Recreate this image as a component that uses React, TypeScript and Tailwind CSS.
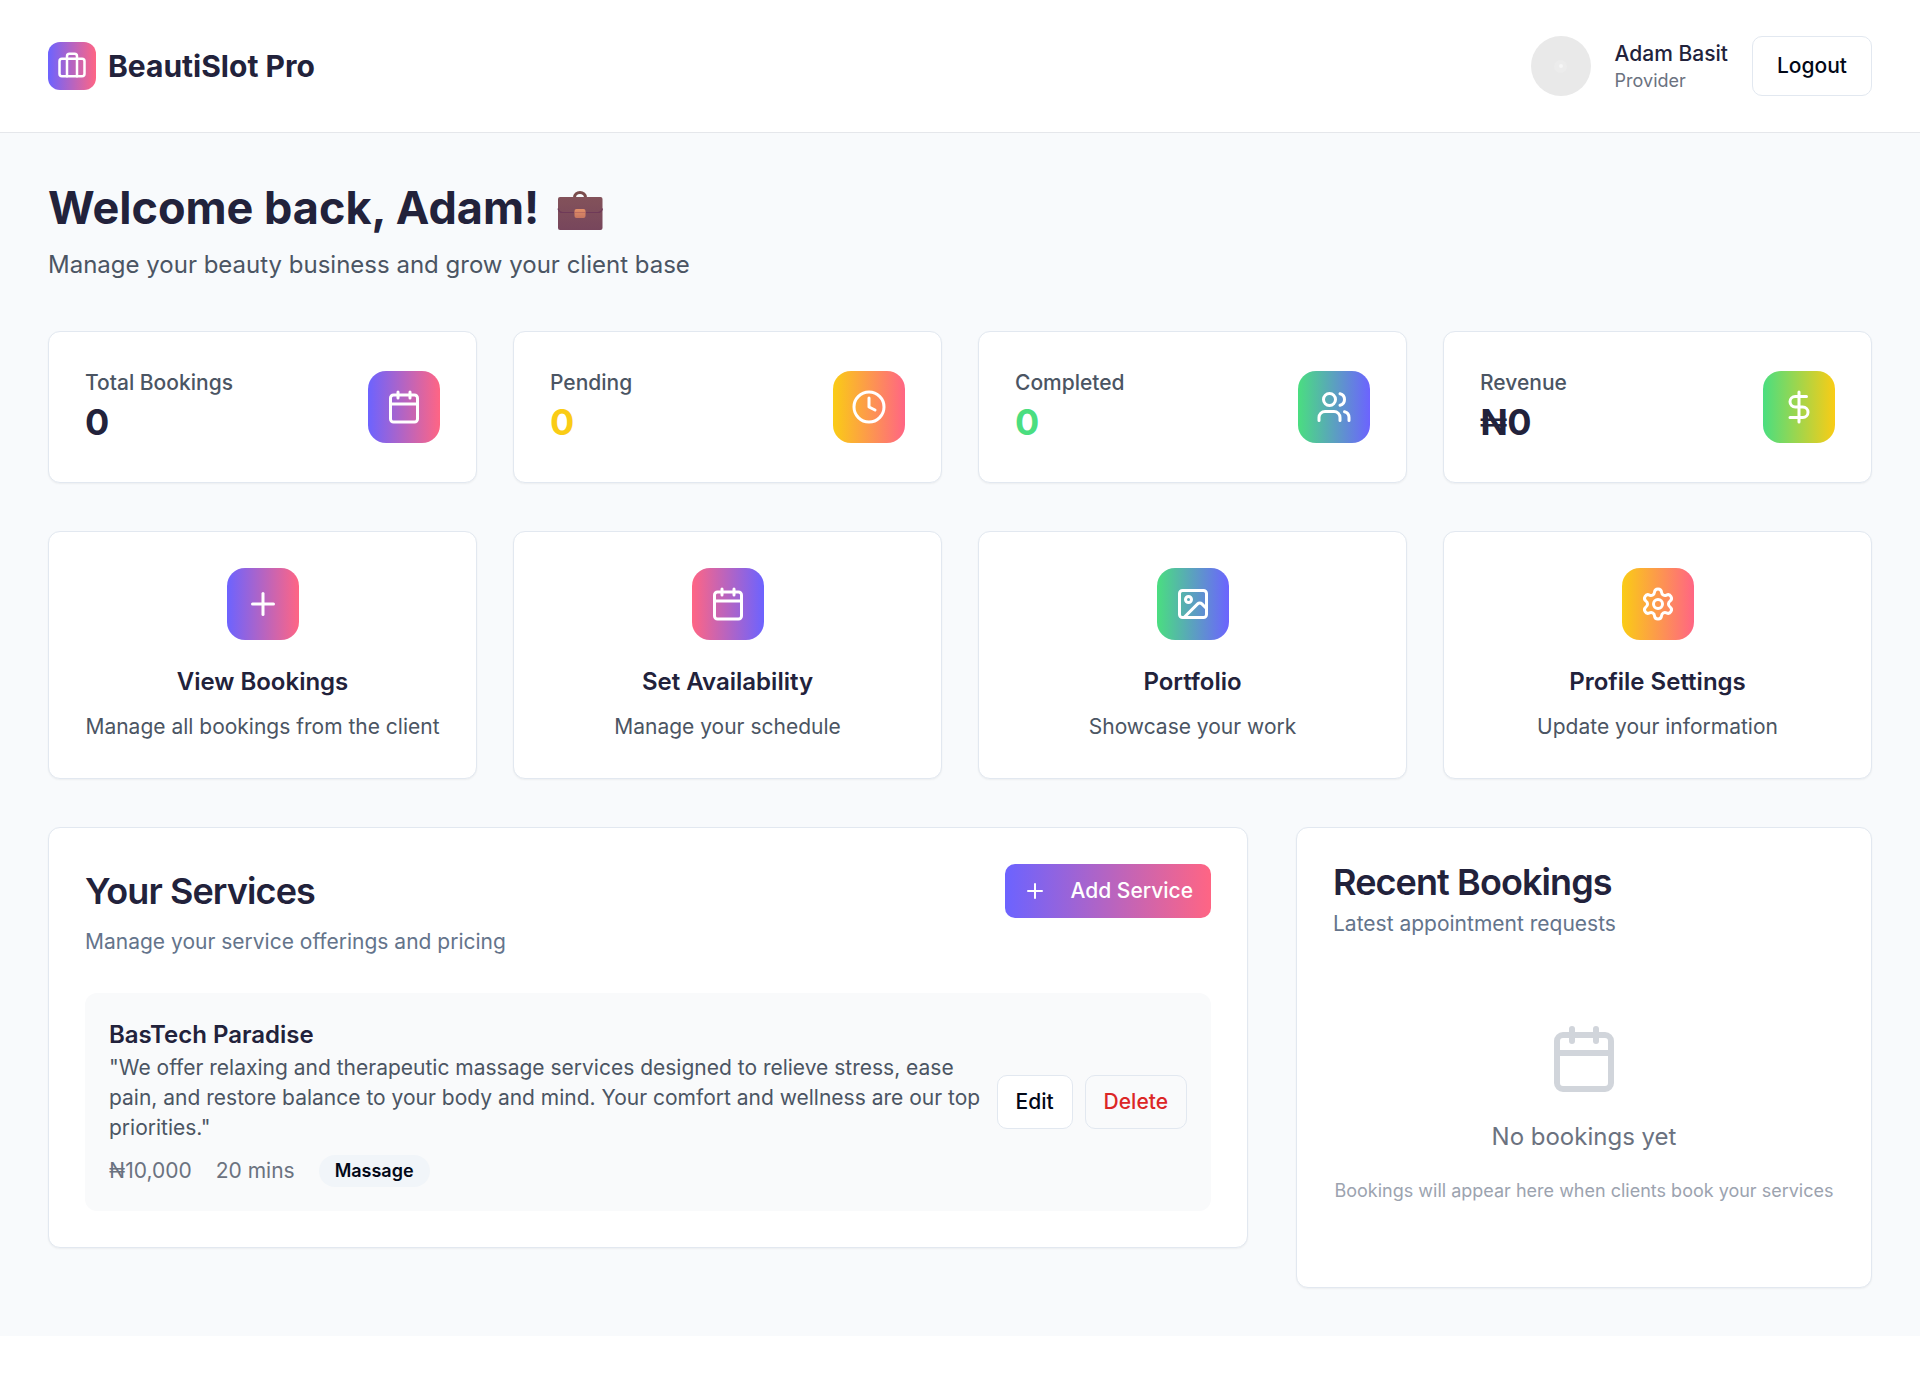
import type { ReactNode } from "react";
import { Calendar, Clock, DollarSign, Image, Plus, Settings, Users } from "lucide-react";

const card = "rounded-xl border border-[#e2e8f0] bg-white shadow-[0_1px_2px_0_rgba(0,0,0,0.05)]";

function BriefcaseIcon() {
  return (
    <svg className="size-[30px]" viewBox="0 0 24 24" fill="none" stroke="currentColor" strokeWidth="2" strokeLinecap="round" strokeLinejoin="round">
      <rect x="2" y="7" width="20" height="14" rx="2" />
      <path d="M16 21V5a2 2 0 0 0-2-2h-4a2 2 0 0 0-2 2v16" />
    </svg>
  );
}

function BriefcaseEmoji() {
  return (
    <svg className="mt-[10px] ml-[18px] h-[39px] w-[46px] shrink-0" viewBox="0 0 46 39">
      <defs>
        <linearGradient id="leather" x1="0" y1="0" x2="0" y2="1">
          <stop offset="0" stopColor="#83525a" />
          <stop offset="1" stopColor="#77465c" />
        </linearGradient>
        <linearGradient id="clasp" x1="0" y1="0" x2="0" y2="1">
          <stop offset="0" stopColor="#e39068" />
          <stop offset="1" stopColor="#c77660" />
        </linearGradient>
      </defs>
      <path d="M17.500 8V6.500a5.500 5 0 0 1 11 0V8" fill="none" stroke="#7a4c4c" strokeWidth="3" />
      <rect x="1" y="6" width="44.500" height="33" rx="2" fill="url(#leather)" />
      <path d="M1 17.500q1 4 4.500 4h35.500q3.500 0 4.500-4" fill="none" stroke="#6f3a58" strokeWidth="1.200" />
      <rect x="17.500" y="18" width="11" height="9" rx="2" fill="url(#clasp)" />
      <path d="M17.500 21.500h11" stroke="#b9685f" strokeWidth="0.800" />
    </svg>
  );
}

function Tile({ className, children }: { className: string; children: ReactNode }) {
  return (
    <div className={`flex size-[72px] shrink-0 items-center justify-center rounded-[18px] bg-linear-to-r/srgb text-white ${className}`}>
      {children}
    </div>
  );
}

const stats = [
  { label: "Total Bookings", value: "0", color: "text-[#22223b]", tile: "from-[#6c63ff] to-[#ff6584]", Icon: Calendar },
  { label: "Pending", value: "0", color: "text-[#facc15]", tile: "from-[#facc15] to-[#ff6584]", Icon: Clock },
  { label: "Completed", value: "0", color: "text-[#4ade80]", tile: "from-[#4ade80] to-[#6c63ff]", Icon: Users },
  { label: "Revenue", value: "₦0", color: "text-[#22223b]", tile: "from-[#4ade80] to-[#facc15]", Icon: DollarSign },
];

const actions = [
  { title: "View Bookings", text: "Manage all bookings from the client", tile: "from-[#6c63ff] to-[#ff6584]", Icon: Plus },
  { title: "Set Availability", text: "Manage your schedule", tile: "from-[#ff6584] to-[#6c63ff]", Icon: Calendar },
  { title: "Portfolio", text: "Showcase your work", tile: "from-[#4ade80] to-[#6c63ff]", Icon: Image },
  { title: "Profile Settings", text: "Update your information", tile: "from-[#facc15] to-[#ff6584]", Icon: Settings },
];

export default function App() {
  return (
    <div className="min-h-[1390px] bg-white font-['Inter',sans-serif] text-[21px] leading-[30px] text-[#22223b]">
      <header className="flex h-[133px] items-center justify-between border-b border-[#e5e7eb] bg-white px-12">
        <div className="flex items-center gap-3">
          <div className="flex size-12 items-center justify-center rounded-xl bg-linear-to-r/srgb from-[#6c63ff] to-[#ff6584] pb-0.5 text-white">
            <BriefcaseIcon />
          </div>
          <span className="text-[30px] leading-[42px] font-bold">BeautiSlot Pro</span>
        </div>
        <div className="flex items-center gap-6">
          <div className="flex size-[60px] items-center justify-center rounded-full bg-[#e9e9e9]">
            <div className="flex size-[13px] items-center justify-center rounded-full bg-[#ececec]">
              <div className="size-1 rounded-full bg-[#f6f6f6]" />
            </div>
          </div>
          <div>
            <p className="leading-[30px] font-medium">Adam Basit</p>
            <p className="text-[18px] leading-6 text-[#6b7280]">Provider</p>
          </div>
          <button className="h-[60px] rounded-[10px] border border-[#e2e8f0] px-6 font-medium text-[#020817]">Logout</button>
        </div>
      </header>

      <main className="h-[1203px] bg-[#f8fafc] px-12 pt-12">
        <div className="flex h-[54px]">
          <h1 className="text-[45px] leading-[54px] font-bold">Welcome back, Adam!</h1>
          <BriefcaseEmoji />
        </div>
        <p className="mt-3 text-[24px] leading-9 text-[#4b5563]">Manage your beauty business and grow your client base</p>

        <section className="mt-12 grid grid-cols-4 gap-9">
          {stats.map(({ label, value, color, tile, Icon }) => (
            <div key={label} className={`flex h-[152px] items-center justify-between px-9 ${card}`}>
              <div>
                <p className="leading-[30px] font-medium text-[#4b5563]">{label}</p>
                <p className={`text-[36px] leading-[48px] font-bold ${color}`}>{value}</p>
              </div>
              <Tile className={tile}><Icon className="size-9" /></Tile>
            </div>
          ))}
        </section>

        <section className="mt-12 grid grid-cols-4 gap-9">
          {actions.map(({ title, text, tile, Icon }) => (
            <div key={title} className={`flex h-[248px] flex-col items-center pt-9 ${card}`}>
              <Tile className={tile}><Icon className="size-9" /></Tile>
              <h3 className="mt-6 text-[24px] leading-9 font-semibold">{title}</h3>
              <p className="mt-3 whitespace-nowrap text-[#4b5563]">{text}</p>
            </div>
          ))}
        </section>

        <section className="mt-12 grid grid-cols-3 items-start gap-12">
          <div className={`col-span-2 p-9 ${card}`}>
            <div className="flex h-[54px] items-center justify-between">
              <h2 className="text-[36px] leading-9 font-semibold tracking-tight">Your Services</h2>
              <button className="flex h-[54px] items-center rounded-[10px] bg-linear-to-r/srgb from-[#6c63ff] to-[#ff6584] px-[18px] font-medium text-white">
                <Plus className="mr-6 size-6" />
                Add Service
              </button>
            </div>
            <p className="mt-[9px] text-[#64748b]">Manage your service offerings and pricing</p>
            <div className="mt-9 flex h-[218px] items-center justify-between rounded-xl bg-[#f9fafb] px-6">
              <div className="flex-1">
                <h4 className="text-[24px] leading-9 font-semibold">BasTech Paradise</h4>
                <p className="whitespace-nowrap text-[#4b5563]">"We offer relaxing and therapeutic massage services designed to relieve stress, ease<br />pain, and restore balance to your body and mind. Your comfort and wellness are our top<br />priorities."</p>
                <div className="mt-3 flex items-center gap-6 text-[#6b7280]">
                  <span>₦10,000</span>
                  <span>20 mins</span>
                  <span className="flex h-8 items-center rounded-full bg-[#f1f5f9] px-4 text-[18px] font-semibold text-[#020817]">Massage</span>
                </div>
              </div>
              <div className="flex shrink-0 gap-3 font-medium">
                <button className="h-[54px] rounded-[10px] border border-[#e2e8f0] bg-white px-[18px] text-[#020817]">Edit</button>
                <button className="h-[54px] rounded-[10px] border border-[#e2e8f0] px-[18px] text-[#dc2626]">Delete</button>
              </div>
            </div>
          </div>

          <div className={`h-[461px] p-9 ${card}`}>
            <h2 className="text-[36px] leading-9 font-semibold tracking-tight">Recent Bookings</h2>
            <p className="mt-[9px] text-[#64748b]">Latest appointment requests</p>
            <div className="mt-[84px] flex flex-col items-center">
              <Calendar className="size-[72px] text-[#d1d5db]" />
              <p className="mt-6 text-[24px] leading-9 text-[#6b7280]">No bookings yet</p>
              <p className="mt-[22px] text-[18px] leading-[27px] whitespace-nowrap text-[#9ca3af]">Bookings will appear here when clients book your services</p>
            </div>
          </div>
        </section>
      </main>
    </div>
  );
}
